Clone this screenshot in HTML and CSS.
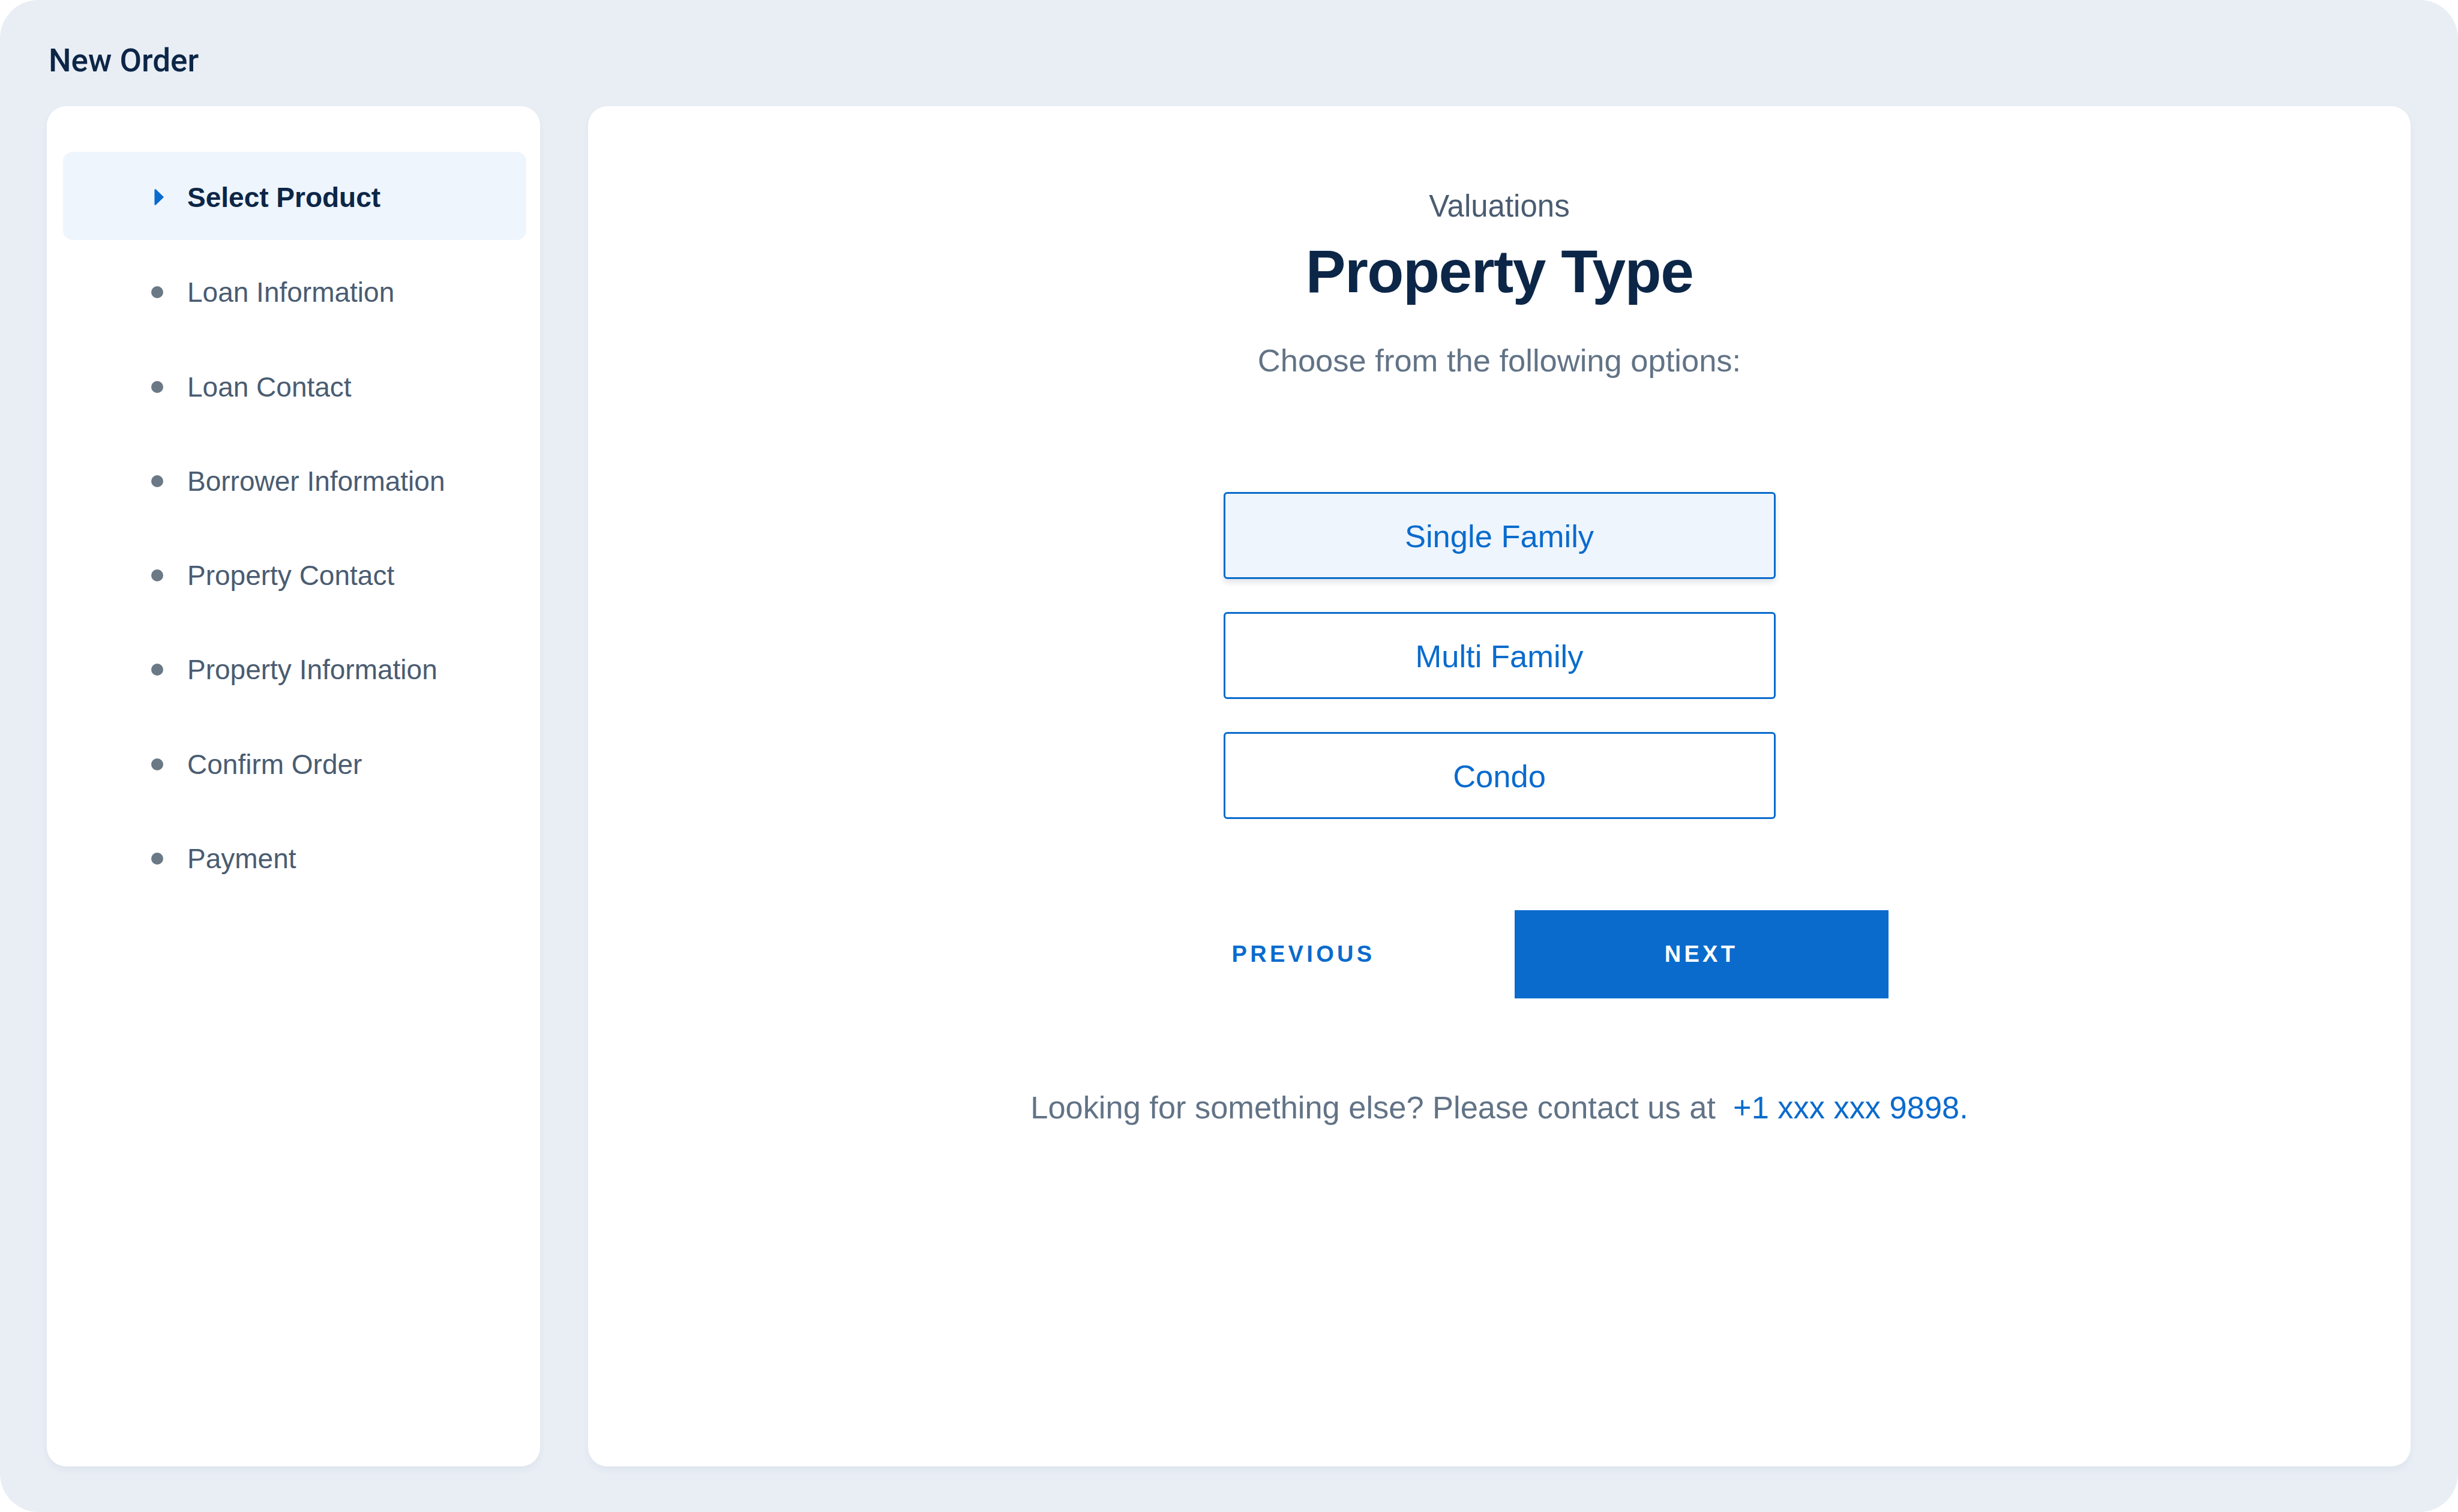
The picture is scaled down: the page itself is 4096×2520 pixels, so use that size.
FILE: index.html
```html
<!DOCTYPE html>
<html lang="en">
<head>
<meta charset="utf-8">
<title>New Order</title>
<link rel="stylesheet" href="styles.css">
</head>
<body>
<div class="frame">
  <header class="header">
    <h1 class="page-title">New Order</h1>
  </header>
  <div class="layout">
    <nav class="sidebar">
      <ul class="steps">
        <li class="step step-active">
          <span class="step-mark">
            <svg class="step-arrow" viewBox="0 0 18 31" width="18" height="31" aria-hidden="true">
              <path d="M2 2 L16 15.5 L2 29 Z" fill="#0A6BCD" stroke="#0A6BCD" stroke-width="3" stroke-linejoin="round"/>
            </svg>
          </span>
          <span class="step-label">Select Product</span>
        </li>
        <li class="step"><span class="step-mark"><span class="step-dot"></span></span><span class="step-label">Loan Information</span></li>
        <li class="step"><span class="step-mark"><span class="step-dot"></span></span><span class="step-label">Loan Contact</span></li>
        <li class="step"><span class="step-mark"><span class="step-dot"></span></span><span class="step-label">Borrower Information</span></li>
        <li class="step"><span class="step-mark"><span class="step-dot"></span></span><span class="step-label">Property Contact</span></li>
        <li class="step"><span class="step-mark"><span class="step-dot"></span></span><span class="step-label">Property Information</span></li>
        <li class="step"><span class="step-mark"><span class="step-dot"></span></span><span class="step-label">Confirm Order</span></li>
        <li class="step"><span class="step-mark"><span class="step-dot"></span></span><span class="step-label">Payment</span></li>
      </ul>
    </nav>
    <main class="content">
      <p class="eyebrow">Valuations</p>
      <h2 class="heading">Property Type</h2>
      <p class="lead">Choose from the following options:</p>
      <div class="options">
        <button class="option option-selected">Single Family</button>
        <button class="option">Multi Family</button>
        <button class="option">Condo</button>
      </div>
      <div class="actions">
        <button class="btn btn-ghost">PREVIOUS</button>
        <button class="btn btn-primary">NEXT</button>
      </div>
      <p class="footnote">Looking for something else? Please contact us at&nbsp; <a class="phone" href="#">+1 xxx xxx 9898.</a></p>
    </main>
  </div>
</div>
</body>
</html>
```

FILE: styles.css
```css
* { box-sizing: border-box; }

html, body {
  margin: 0;
  padding: 0;
  background: #ffffff;
}

body {
  font-family: "Liberation Sans", Arial, sans-serif;
  color: #0C2647;
}

.frame {
  width: 4096px;
  height: 2520px;
  background: #E9EEF5;
  border-radius: 64px;
  padding: 0 79px 76px 78px;
  display: flex;
  flex-direction: column;
}

.header {
  height: 177px;
  padding-top: 75px;
  padding-left: 3px;
}

.page-title {
  margin: 0;
  font-family: Roboto, "Liberation Sans", sans-serif;
  font-weight: 500;
  font-size: 53px;
  line-height: 53px;
  color: #0C2647;
}

.layout {
  flex: 1;
  display: flex;
  gap: 80px;
}

.sidebar {
  width: 822px;
  flex: none;
  background: #ffffff;
  border-radius: 32px;
  padding: 76px 23px 0 27px;
  box-shadow: 0 6px 12px rgba(40, 60, 100, 0.05);
}

.steps {
  list-style: none;
  margin: 0;
  padding: 0;
  display: flex;
  flex-direction: column;
  gap: 10.3px;
}

.step {
  height: 147px;
  border-radius: 16px;
  display: flex;
  align-items: center;
  padding: 7px 0 0 146px;
  font-size: 46px;
  line-height: 52px;
  color: #4A5C71;
}

.step-active {
  background: #EEF5FD;
  color: #0C2647;
  font-weight: 700;
  padding-top: 5px;
}

.step-mark {
  width: 22px;
  height: 31px;
  margin-right: 39px;
  display: flex;
  align-items: center;
  justify-content: center;
  flex: none;
}

.step-active .step-mark {
  margin-top: -2px;
}

.step-arrow {
  display: block;
  margin-left: 6px;
}

.step-dot {
  width: 20px;
  height: 20px;
  border-radius: 50%;
  background: #6B7886;
}

.content {
  flex: 1;
  background: #ffffff;
  border-radius: 32px;
  box-shadow: 0 6px 12px rgba(40, 60, 100, 0.05);
  display: flex;
  flex-direction: column;
  align-items: center;
  padding-top: 137px;
}

.eyebrow {
  margin: 0;
  font-size: 51px;
  line-height: 60px;
  color: #4A5C71;
}

.heading {
  margin: 23px 0 0;
  font-size: 100px;
  line-height: 110px;
  font-weight: 700;
  letter-spacing: -1.5px;
  color: #0C2647;
}

.lead {
  margin: 64px 0 0;
  font-size: 52.5px;
  line-height: 60px;
  color: #627386;
}

.options {
  margin-top: 189px;
  display: flex;
  flex-direction: column;
  gap: 55px;
}

.option {
  width: 920px;
  height: 145px;
  border: 3px solid #0A6BCD;
  border-radius: 6px;
  background: #ffffff;
  color: #0A6BCD;
  font-family: "Liberation Sans", Arial, sans-serif;
  font-size: 52.5px;
  line-height: 60px;
  padding: 3px 0 0;
  cursor: pointer;
}

.option-selected {
  background: #EEF5FD;
  box-shadow: 0 6px 10px rgba(20, 40, 80, 0.12);
}

.actions {
  margin-top: 152px;
  display: flex;
  gap: 40px;
  margin-left: 10px;
}

.btn {
  width: 623px;
  height: 147px;
  border: 0;
  border-radius: 0;
  padding: 0;
  font-family: "Liberation Sans", Arial, sans-serif;
  font-weight: 700;
  font-size: 38px;
  letter-spacing: 0.14em;
  cursor: pointer;
}

.btn-ghost {
  background: transparent;
  color: #0A6BCD;
}

.btn-primary {
  background: #0A6BCD;
  color: #ffffff;
}

.footnote {
  margin: 152px 0 0;
  font-size: 52.4px;
  line-height: 60px;
  color: #627386;
}

.phone {
  color: #0A6BCD;
  text-decoration: none;
}
```
